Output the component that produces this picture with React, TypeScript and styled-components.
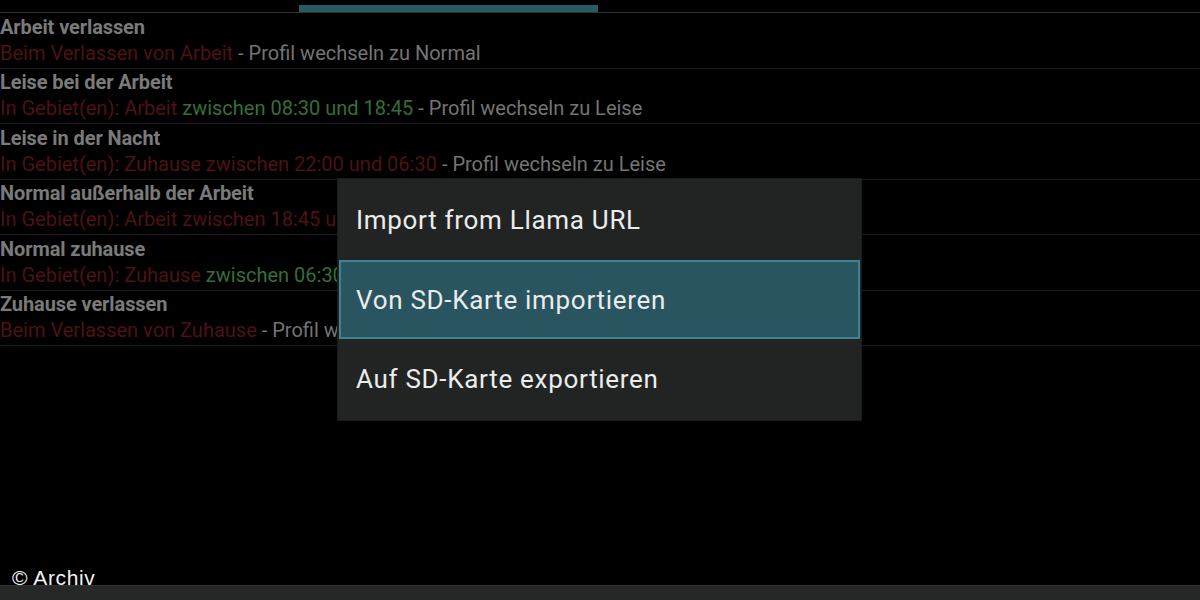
import React from "react";
import styled, { createGlobalStyle } from "styled-components";

const Global = createGlobalStyle`
  html, body { margin: 0; padding: 0; background: #000; }
  body { font-family: Roboto, "Noto Sans", sans-serif; }
`;

const Screen = styled.div`
  position: relative;
  width: 1200px;
  height: 600px;
  background: #000;
  overflow: hidden;
  display: flex;
  flex-direction: column;
`;

const TabStrip = styled.div`
  height: 13px;
  display: flex;
  align-items: flex-end;
  border-bottom: 1px solid #2c3133;
  box-sizing: border-box;
  padding-left: 299px;
`;

const TabIndicator = styled.div`
  width: 299px;
  height: 7px;
  background: #2a5a66;
`;

const List = styled.div`
  display: flex;
  flex-direction: column;
`;

const Row = styled.div`
  height: 55.5px;
  box-sizing: border-box;
  border-bottom: 1px solid #1c1f20;
  display: flex;
  flex-direction: column;
  justify-content: center;
  gap: 3px;
  white-space: nowrap;
`;

const Title = styled.div`
  font-size: 20px;
  line-height: 23px;
  font-weight: 700;
  color: #7a7a7a;
  letter-spacing: -0.1px;
`;

const Detail = styled.div`
  font-size: 20px;
  line-height: 23px;
  color: #747474;
  letter-spacing: 0;
`;

const Part = styled.span<{ $tone: "red" | "green" | "gray" }>`
  color: ${(p) =>
    p.$tone === "red" ? "#4e1114" : p.$tone === "green" ? "#376d38" : "#747474"};
`;

const BottomBar = styled.div`
  margin-top: auto;
  height: 14px;
  background: #262727;
  border-top: 1px solid #333;
`;

const Watermark = styled.div`
  position: absolute;
  left: 12px;
  top: 566px;
  font-family: "Liberation Sans", Arial, sans-serif;
  font-size: 21px;
  letter-spacing: 0.6px;
  color: #f2f2f2;
`;

const Menu = styled.div`
  position: absolute;
  left: 337px;
  top: 178px;
  width: 525px;
  height: 243px;
  box-sizing: border-box;
  background: #222424;
  border: 1px solid #1a1c1c;
  display: flex;
  flex-direction: column;
  justify-content: space-between;
  padding: 1px;
`;

const MenuItem = styled.div<{ $active?: boolean }>`
  height: 80px;
  box-sizing: border-box;
  display: flex;
  align-items: center;
  padding-left: 15px;
  font-size: 26px;
  letter-spacing: 0.7px;
  color: #ececec;
  background: ${(p) => (p.$active ? "#285560" : "transparent")};
  border: 2px solid ${(p) => (p.$active ? "#3f8391" : "transparent")};
`;

type Seg = [string, "red" | "green" | "gray"];

const rules: { title: string; parts: Seg[] }[] = [
  {
    title: "Arbeit verlassen",
    parts: [
      ["Beim Verlassen von Arbeit", "red"],
      [" - Profil wechseln zu Normal", "gray"],
    ],
  },
  {
    title: "Leise bei der Arbeit",
    parts: [
      ["In Gebiet(en): Arbeit", "red"],
      [" zwischen 08:30 und 18:45", "green"],
      [" - Profil wechseln zu Leise", "gray"],
    ],
  },
  {
    title: "Leise in der Nacht",
    parts: [
      ["In Gebiet(en): Zuhause zwischen 22:00 und 06:30", "red"],
      [" - Profil wechseln zu Leise", "gray"],
    ],
  },
  {
    title: "Normal außerhalb der Arbeit",
    parts: [
      ["In Gebiet(en): Arbeit zwischen 18:45 und 08:30", "red"],
      [" - Profil wechseln zu Normal", "gray"],
    ],
  },
  {
    title: "Normal zuhause",
    parts: [
      ["In Gebiet(en): Zuhause", "red"],
      [" zwischen 06:30 und 22:00", "green"],
      [" - Profil wechseln zu Normal", "gray"],
    ],
  },
  {
    title: "Zuhause verlassen",
    parts: [
      ["Beim Verlassen von Zuhause", "red"],
      [" - Profil wechseln zu Normal", "gray"],
    ],
  },
];

export default function App() {
  return (
    <>
      <Global />
      <Screen>
        <TabStrip>
          <TabIndicator />
        </TabStrip>
        <List>
          {rules.map((r) => (
            <Row key={r.title}>
              <Title>{r.title}</Title>
              <Detail>
                {r.parts.map(([t, tone], i) => (
                  <Part key={i} $tone={tone}>
                    {t}
                  </Part>
                ))}
              </Detail>
            </Row>
          ))}
        </List>
        <BottomBar />
        <Watermark>© Archiv</Watermark>
        <Menu>
          <MenuItem>Import from Llama URL</MenuItem>
          <MenuItem $active>Von SD-Karte importieren</MenuItem>
          <MenuItem>Auf SD-Karte exportieren</MenuItem>
        </Menu>
      </Screen>
    </>
  );
}
